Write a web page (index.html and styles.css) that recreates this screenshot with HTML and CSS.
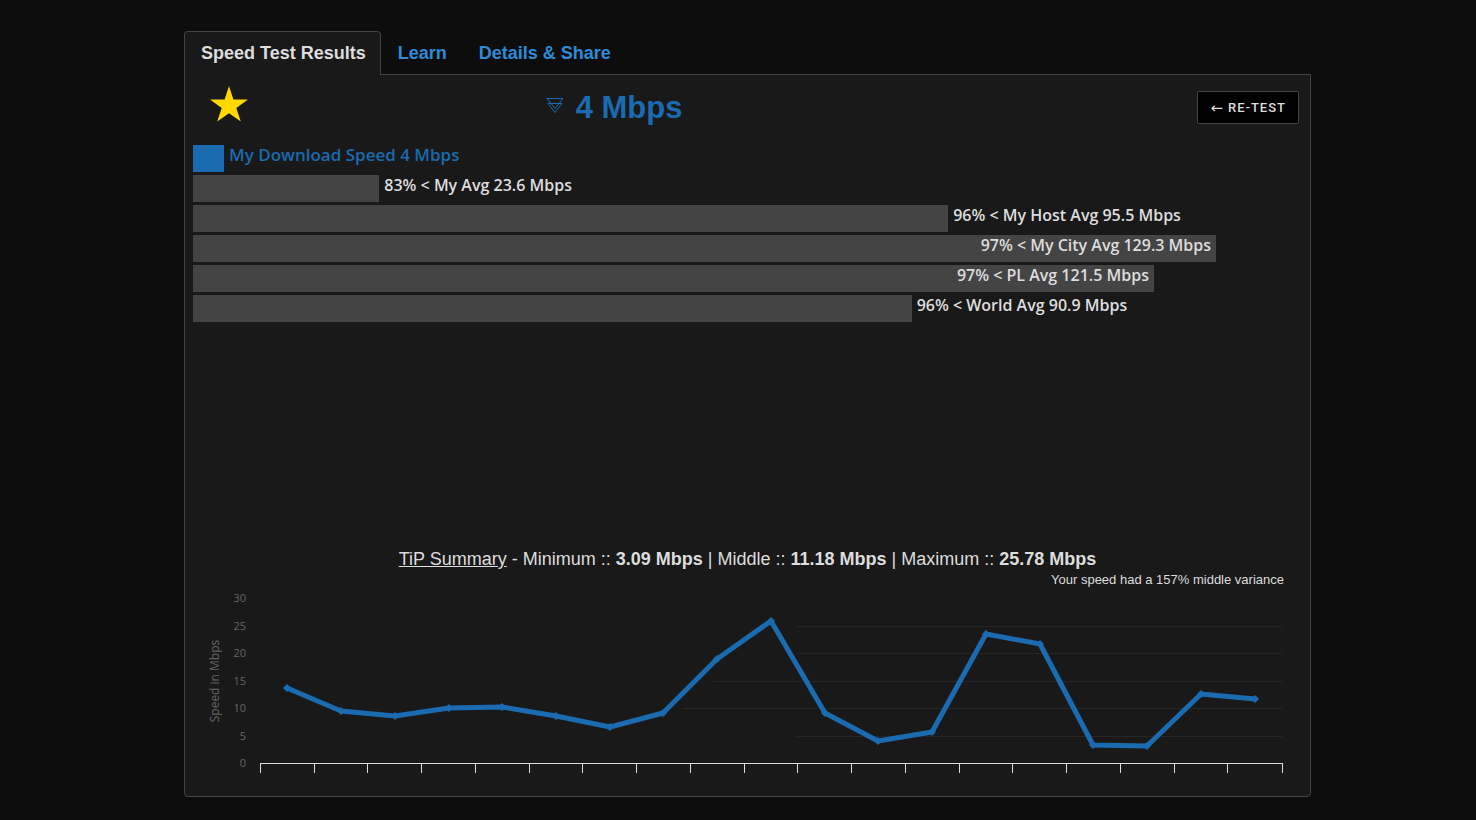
FILE: index.html
```html
<!DOCTYPE html>
<html lang="en">
<head>
    <meta charset="UTF-8">
    <meta name="viewport" content="width=device-width, initial-scale=1.0">
    <title>Speed Test Results</title>
    <link rel="stylesheet" href="styles.css">
</head>
<body>
    <main class="container">
        <nav class="tabs">
            <a class="tab active" href="#results">Speed Test Results</a>
            <a class="tab" href="#learn">Learn</a>
            <a class="tab" href="#details">Details &amp; Share</a>
        </nav>

        <section class="panel" id="results">
            <div class="result-header">
                <svg class="star" viewBox="0 0 38 36" aria-hidden="true">
                    <path d="M19 0L23.4 13.6H38L26.3 22L30.8 35.6L19 27.2L7.2 35.6L11.7 22L0 13.6H14.6Z"/>
                </svg>
                <h1 class="speed">
                    <svg class="speed-icon" viewBox="0 0 18 18" aria-hidden="true">
                        <path d="M1 1.5H17L9 11.5ZM2 6.5H16L9 15.5Z"/>
                    </svg>
                    4 Mbps
                </h1>
                <button class="retest-btn" type="button"><span class="arrow">←</span>RE-TEST</button>
            </div>

            <div class="bars">
                <div class="bar-row mine">
                    <div class="bar" style="width: 2.8%"></div>
                    <span class="bar-label">My Download Speed 4 Mbps</span>
                </div>
                <div class="bar-row">
                    <div class="bar" style="width: 16.8%"></div>
                    <span class="bar-label">83% &lt; My Avg 23.6 Mbps</span>
                </div>
                <div class="bar-row">
                    <div class="bar" style="width: 68.1%"></div>
                    <span class="bar-label">96% &lt; My Host Avg 95.5 Mbps</span>
                </div>
                <div class="bar-row">
                    <div class="bar" style="width: 92.25%"><span class="bar-label">97% &lt; My City Avg 129.3 Mbps</span></div>
                </div>
                <div class="bar-row">
                    <div class="bar" style="width: 86.65%"><span class="bar-label">97% &lt; PL Avg 121.5 Mbps</span></div>
                </div>
                <div class="bar-row">
                    <div class="bar" style="width: 64.8%"></div>
                    <span class="bar-label">96% &lt; World Avg 90.9 Mbps</span>
                </div>
            </div>

            <div class="summary">
                <u>TiP Summary</u> - Minimum :: <b>3.09 Mbps</b> | Middle :: <b>11.18 Mbps</b> | Maximum :: <b>25.78 Mbps</b>
            </div>
            <div class="variance">Your speed had a 157% middle variance</div>

            <svg class="chart" viewBox="0 0 1109 200" role="img" aria-label="Speed in Mbps">
                <defs>
                    <marker id="point" viewBox="0 0 8 8" refX="4" refY="4" markerWidth="8" markerHeight="8" markerUnits="userSpaceOnUse">
                        <path class="point" d="M4 0L8 4L4 8L0 4Z"/>
                    </marker>
                </defs>
                <path class="grid" d="M604 36.5H1089M604 63.5H1089M520 91.5H1089M490 118.5H1089M604 146.5H1089"/>
                <g class="y-labels">
                    <text x="53" y="12">30</text>
                    <text x="53" y="40">25</text>
                    <text x="53" y="67">20</text>
                    <text x="53" y="95">15</text>
                    <text x="53" y="122">10</text>
                    <text x="53" y="150">5</text>
                    <text x="53" y="177">0</text>
                </g>
                <text class="axis-title" transform="translate(26 91) rotate(-90)">Speed in Mbps</text>
                <path class="axis" d="M67 173.5H1090M67.5 173V183M121.5 173V183M174.5 173V183M228.5 173V183M282.5 173V183M336.5 173V183M389.5 173V183M443.5 173V183M497.5 173V183M551.5 173V183M604.5 173V183M658.5 173V183M712.5 173V183M766.5 173V183M819.5 173V183M873.5 173V183M927.5 173V183M981.5 173V183M1034.5 173V183M1089.5 173V183"/>
                <polyline class="line" points="94,98 148,121 202,126 256,118 309,117 363,126 417,137 470,123 524,69 578,31 632,123 685,151 739,142 793,44 847,54 900,155 954,156 1008,104 1062,109"/>
            </svg>
        </section>
    </main>
</body>
</html>
```

FILE: styles.css
```css
* {
    box-sizing: border-box;
}

body {
    margin: 0;
    background-color: #0d0d0d;
    color: #ddd;
    font-family: "Liberation Sans", Arial, sans-serif;
    font-size: 18px;
}

.container {
    padding: 31px 165px 23px 184px;
}

.tabs {
    display: flex;
}

.tab {
    padding: 0 14px 0 16px;
    border: 1px solid transparent;
    border-bottom: none;
    border-radius: 4px 4px 0 0;
    color: #2f8bd8;
    font-weight: bold;
    line-height: 42px;
    text-decoration: none;
}

.tab.active {
    position: relative;
    margin-bottom: -1px;
    padding-bottom: 1px;
    border-color: #444;
    background-color: #191919;
    color: #ddd;
}

.panel {
    padding: 16px 8px 6px;
    border: 1px solid #444;
    border-radius: 0 0 4px 4px;
    background-color: #191919;
}

.result-header {
    display: grid;
    grid-template-columns: 31.8% 1fr auto;
    align-items: start;
    margin-bottom: 21px;
}

.star {
    width: 38px;
    height: 36px;
    margin: -5px 0 0 17px;
    fill: #ffd900;
}

.speed {
    display: flex;
    align-items: center;
    gap: 12px;
    margin: 0;
    color: #1a6bb0;
    font-size: 31px;
    line-height: 33px;
}

.speed-icon {
    width: 18px;
    height: 18px;
    margin-bottom: 4px;
    fill: none;
    stroke: #1a6bb0;
}

.retest-btn {
    display: flex;
    align-items: center;
    gap: 4px;
    height: 33px;
    margin-right: 3px;
    padding: 0 12px;
    border: 1px solid #444;
    border-radius: 2px;
    background-color: #000;
    color: #ddd;
    font-family: Roboto, sans-serif;
    font-size: 13px;
    font-weight: 500;
    letter-spacing: 1px;
    cursor: pointer;
}

.arrow {
    font-family: "DejaVu Sans", sans-serif;
    font-size: 15px;
}

.bars {
    display: flex;
    flex-direction: column;
    gap: 3px;
    min-height: 400px;
    font-family: "Open Sans", sans-serif;
    font-size: 16px;
    font-weight: 600;
}

.bar-row {
    display: flex;
}

.bar {
    display: flex;
    flex-shrink: 0;
    justify-content: flex-end;
    height: 27px;
    background-color: #444;
}

.bar-label {
    padding: 0 5px;
    line-height: 20px;
    white-space: nowrap;
}

.mine .bar {
    background-color: #1a6bb0;
}

.mine .bar-label {
    color: #1a6bb0;
    font-size: 17px;
}

.summary {
    line-height: 28px;
    text-align: center;
}

.variance {
    padding-right: 18px;
    font-size: 13px;
    line-height: 14px;
    text-align: right;
}

.chart {
    display: block;
    width: 100%;
    margin-top: 3px;
}

.grid {
    stroke: #262626;
}

.axis {
    fill: none;
    stroke: #ddd;
}

.line {
    fill: none;
    stroke: #1a6bb0;
    stroke-width: 5;
    stroke-linejoin: round;
    marker-start: url(#point);
    marker-mid: url(#point);
    marker-end: url(#point);
}

.point {
    fill: #1a6bb0;
}

.y-labels,
.axis-title {
    fill: #666;
    font-family: "Open Sans", sans-serif;
    font-size: 11px;
}

.y-labels {
    text-anchor: end;
}

.axis-title {
    font-size: 12px;
    text-anchor: middle;
}
```
